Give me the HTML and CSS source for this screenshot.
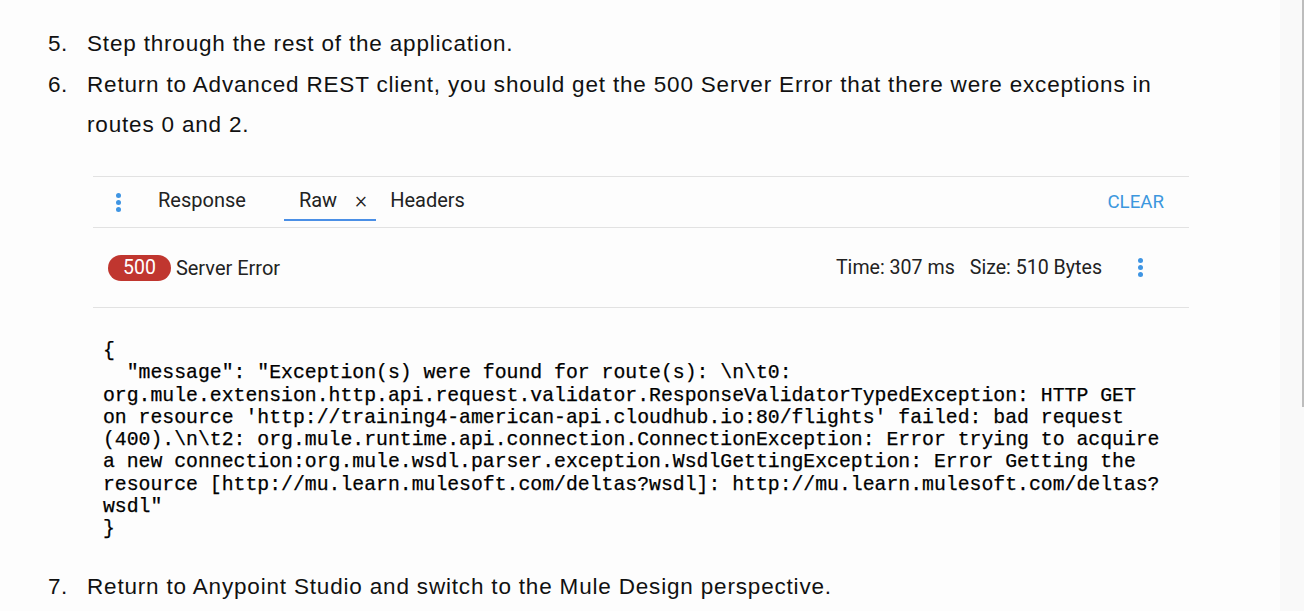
FILE: index.html
```html
<!DOCTYPE html>
<html>
<head>
<meta charset="utf-8">
<link rel="stylesheet" href="styles.css">
</head>
<body>
<div class="page">
  <div class="doc">
    <div class="item"><span class="num">5.</span><span class="txt">Step through the rest of the application.</span></div>
    <div class="item"><span class="num">6.</span><span class="txt">Return to Advanced REST client, you should get the 500 Server Error that there were exceptions in routes 0 and 2.</span></div>

    <div class="panel">
      <div class="tabs">
        <span class="dots"><i></i><i></i><i></i></span>
        <span class="tab t-response">Response</span>
        <span class="tab t-raw active">Raw <span class="close">×</span></span>
        <span class="tab t-headers">Headers</span>
        <span class="spacer"></span>
        <span class="clear">CLEAR</span>
      </div>
      <div class="status">
        <span class="badge">500</span>
        <span class="stext">Server Error</span>
        <span class="spacer"></span>
        <span class="meta">Time: 307 ms</span>
        <span class="meta size">Size: 510 Bytes</span>
        <span class="dots dots2"><i></i><i></i><i></i></span>
      </div>
      <pre class="code">{
  "message": "Exception(s) were found for route(s): \n\t0:
org.mule.extension.http.api.request.validator.ResponseValidatorTypedException: HTTP GET
on resource 'http://training4-american-api.cloudhub.io:80/flights' failed: bad request
(400).\n\t2: org.mule.runtime.api.connection.ConnectionException: Error trying to acquire
a new connection:org.mule.wsdl.parser.exception.WsdlGettingException: Error Getting the
resource [http://mu.learn.mulesoft.com/deltas?wsdl]: http://mu.learn.mulesoft.com/deltas?
wsdl"
}</pre>
    </div>

    <div class="item item7"><span class="num">7.</span><span class="txt">Return to Anypoint Studio and switch to the Mule Design perspective.</span></div>
  </div>
  <div class="scroll"><div class="thumb"></div></div>
</div>
</body>
</html>
```
FILE: styles.css
```css
html, body {
  margin: 0;
  padding: 0;
  height: 100%;
  overflow: hidden;
}
body {
  background: #fdfdfd;
  font-family: "Liberation Sans", Arial, sans-serif;
  color: #111;
}
.page {
  display: flex;
  height: 611px;
}
.doc {
  flex: 1;
  padding-top: 24px;
}
.scroll {
  width: 24px;
  background: #f9f9f9;
  display: flex;
  justify-content: flex-end;
}
.thumb {
  width: 2px;
  height: 407px;
  background: #bdbdbd;
}
.item {
  display: flex;
  font-size: 22.5px;
  letter-spacing: 0.82px;
  line-height: 40px;
}
.item + .item {
  margin-top: 1px;
}
.num {
  width: 39px;
  padding-left: 48px;
  flex: none;
  letter-spacing: 0.4px;
}
.txt {
  width: 1100px;
}
.panel {
  margin: 31px 0 0 93px;
  width: 1096px;
  font-family: Roboto, "Liberation Sans", sans-serif;
  color: #222;
}
.tabs {
  display: flex;
  align-items: center;
  height: 50px;
  border-top: 1px solid #e2e2e2;
  border-bottom: 1px solid #e2e2e2;
  font-size: 20px;
}
.tab {
  margin-top: -4px;
}
.dots {
  display: flex;
  flex-direction: column;
  gap: 2px;
  margin-left: 23px;
}
.dots i {
  display: block;
  width: 5px;
  height: 5px;
  border-radius: 50%;
  background: #3f95e3;
}
.t-response {
  margin-left: 37px;
}
.t-raw {
  margin-left: 38px;
  padding: 0 9px 0 15px;
  height: 50px;
  display: flex;
  align-items: center;
  position: relative;
}
.t-raw::after {
  content: "";
  position: absolute;
  left: 0;
  right: 0;
  bottom: 4px;
  height: 2px;
  background: #4a8fe6;
}
.close {
  margin-left: 18px;
  font-size: 23px;
  font-weight: 300;
}
.t-headers {
  margin-left: 14px;
}
.spacer {
  flex: 1;
}
.clear {
  color: #3c97de;
  font-size: 18.7px;
  margin-right: 25px;
}
.status {
  display: flex;
  align-items: center;
  height: 79px;
  border-bottom: 1px solid #e2e2e2;
  font-size: 20px;
}
.badge {
  margin-left: 15px;
  background: #c0362f;
  color: #fff;
  border-radius: 13px;
  height: 26px;
  line-height: 26px;
  padding: 0 15px;
  font-size: 19.5px;
}
.stext {
  margin-left: 5px;
}
.meta {
  font-size: 19.6px;
}
.meta.size {
  margin-left: 15px;
}
.dots2 {
  margin-left: 36px;
  margin-right: 46px;
}
.code {
  margin: 32px 0 0 10px;
  font-family: "Liberation Mono", "Courier New", monospace;
  font-size: 19.8px;
  line-height: 22.3px;
  color: #000;
  -webkit-text-stroke: 0.25px #000;
}
.item7 {
  margin-top: 26px;
}
```
